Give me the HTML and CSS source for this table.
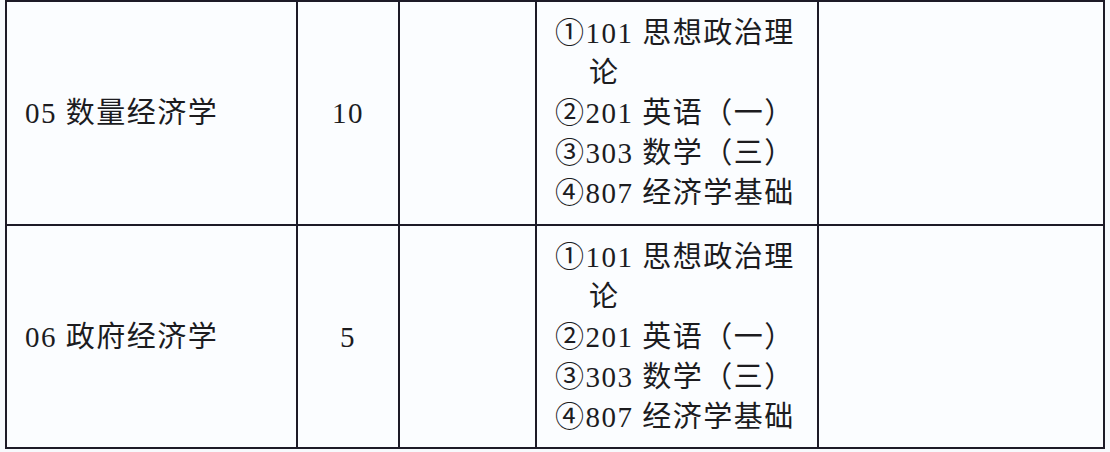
FILE: index.html
```html
<!DOCTYPE html>
<html lang="zh-CN">
<head>
<meta charset="utf-8">
<title>专业目录</title>
<link rel="stylesheet" href="styles.css">
</head>
<body>
<div class="sheet">
  <div class="cell name">05 数量经济学</div>
  <div class="cell num">10</div>
  <div class="cell"></div>
  <div class="cell exams">
    <div class="item">①101 思想政治理论</div>
    <div class="item">②201 英语（一）</div>
    <div class="item">③303 数学（三）</div>
    <div class="item">④807 经济学基础</div>
  </div>
  <div class="cell"></div>

  <div class="cell name">06 政府经济学</div>
  <div class="cell num">5</div>
  <div class="cell"></div>
  <div class="cell exams">
    <div class="item">①101 思想政治理论</div>
    <div class="item">②201 英语（一）</div>
    <div class="item">③303 数学（三）</div>
    <div class="item">④807 经济学基础</div>
  </div>
  <div class="cell"></div>
</div>
</body>
</html>
```

FILE: styles.css
```css
html, body {
  margin: 0;
  padding: 0;
  background: #f7fafd;
}

body {
  font-family: "Liberation Serif", "Noto Sans CJK SC", serif;
  font-size: 29px;
  letter-spacing: 1.5px;
  color: #1c1c1f;
}

.sheet {
  display: grid;
  grid-template-columns: 289px 100px 135px 280px 284px;
  grid-template-rows: 222px 221px;
  gap: 2px;
  padding: 2px;
  margin-left: 5px;
  width: max-content;
  background: #1d1b27;
}

.cell {
  background: #fbfdff;
  display: flex;
  align-items: center;
  line-height: 40px;
}

.name {
  padding-left: 18px;
}

.num {
  justify-content: center;
}

.exams {
  flex-direction: column;
  align-items: stretch;
  justify-content: center;
  padding-left: 18px;
  padding-right: 14px;
}

.item {
  padding-left: 34px;
  text-indent: -34px;
}
```
